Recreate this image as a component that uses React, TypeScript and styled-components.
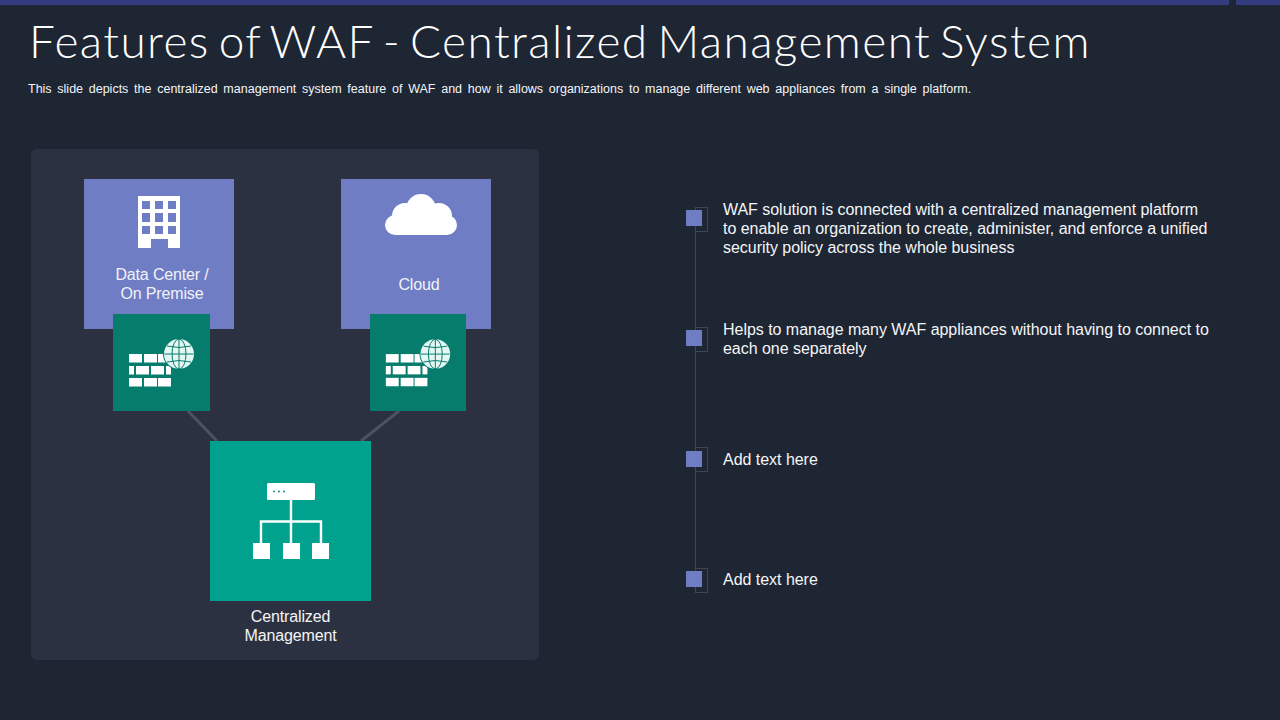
import React from "react";
import styled, { createGlobalStyle } from "styled-components";

const Global = createGlobalStyle`
  html, body { margin: 0; padding: 0; background: #1e2533; }
  * { box-sizing: border-box; }
`;

const Slide = styled.div`
  width: 1280px;
  height: 720px;
  overflow: hidden;
  background: #1e2533;
  color: #f4f5f7;
  font-family: "Liberation Sans", Arial, sans-serif;
`;

const TopBar = styled.div`
  display: flex;
  gap: 7px;
  height: 5px;
`;

const TopBarPiece = styled.div<{ $width?: number }>`
  flex: ${(p) => (p.$width ? `0 0 ${p.$width}px` : "1")};
  background: #343c80;
`;

const Header = styled.header`
  height: 144px;
  padding: 11px 0 0 28px;
`;

const Title = styled.h1`
  margin: 0 0 0 1px;
  font-family: "Lato", sans-serif;
  font-weight: 300;
  font-size: 46px;
  line-height: 50px;
  letter-spacing: 1.4px;
  word-spacing: -5px;
  white-space: nowrap;
  color: #ffffff;
`;

const Subtitle = styled.p`
  margin: 15px 0 0;
  font-size: 12.5px;
  line-height: 16px;
  word-spacing: 2.25px;
  white-space: nowrap;
`;

const Main = styled.main`
  display: flex;
  padding-left: 31px;
`;

const Panel = styled.section`
  position: relative;
  flex: 0 0 508px;
  height: 511px;
  border-radius: 6px;
  background: #2b3140;
`;

const Connectors = styled.svg`
  position: absolute;
  inset: 0;
`;

const Tile = styled.div<{ $x: number; $y: number; $w: number; $h: number; $bg: string }>`
  position: absolute;
  left: ${(p) => p.$x}px;
  top: ${(p) => p.$y}px;
  width: ${(p) => p.$w}px;
  height: ${(p) => p.$h}px;
  background: ${(p) => p.$bg};
  display: flex;
`;

const SourceTile = styled(Tile)<{ $pad: number }>`
  flex-direction: column;
  align-items: center;
  padding-top: ${(p) => p.$pad}px;
`;

const CenterTile = styled(Tile)`
  align-items: center;
  justify-content: center;
`;

const TileIcon = styled.svg<{ $shift?: number }>`
  display: block;
  flex: none;
  margin-left: ${(p) => p.$shift ?? 0}px;
`;

const TileLabel = styled.div<{ $gap: number }>`
  margin: ${(p) => p.$gap}px 0 0 6px;
  font-size: 16px;
  line-height: 19px;
  letter-spacing: -0.15px;
  text-align: center;
  color: #f1f2f8;
`;

const CanvasLabel = styled.div`
  position: absolute;
  left: 179px;
  top: 458px;
  width: 161px;
  font-size: 16px;
  line-height: 19px;
  letter-spacing: -0.15px;
  text-align: center;
`;

const PointList = styled.ul`
  position: relative;
  list-style: none;
  flex: 0 0 524px;
  align-self: flex-start;
  margin: 58px 0 0 147px;
  padding: 0;

  &::before {
    content: "";
    position: absolute;
    left: 9px;
    top: 0;
    bottom: 0;
    width: 1px;
    background: #3f4658;
  }
`;

const Point = styled.li<{ $height: number }>`
  display: flex;
  height: ${(p) => p.$height}px;
`;

const Marker = styled.div`
  position: relative;
  flex: 0 0 19px;
  height: 24px;

  &::after {
    content: "";
    position: absolute;
    left: 9px;
    top: 0;
    width: 11px;
    height: 23px;
    border: 1px solid #3f4658;
  }
`;

const MarkerSquare = styled.span<{ $top: number }>`
  position: absolute;
  z-index: 1;
  left: 0;
  top: ${(p) => p.$top}px;
  width: 16px;
  height: 16px;
  background: #6f7dc5;
`;

const PointText = styled.div<{ $top: number }>`
  width: 487px;
  margin: ${(p) => p.$top}px 0 0 18px;
  font-size: 16px;
  line-height: 19px;
  letter-spacing: -0.03px;
`;

const Line = styled.span`
  display: block;
  white-space: nowrap;
`;

const Building = () => (
  <TileIcon width="42" height="52" viewBox="0 0 42 52">
    <path
      fill="#fff"
      fillRule="evenodd"
      d="M0 0H42V52H30V43H13V52H0ZM4 5V13H12V5ZM17 5V13H25V5ZM30 5V13H38V5ZM4 17V26H12V17ZM17 17V26H25V17ZM30 17V26H38V17ZM4 30V38H12V30ZM17 30V38H25V30ZM30 30V38H38V30Z"
    />
  </TileIcon>
);

const Cloud = () => (
  <TileIcon $shift={10} width="72" height="41" viewBox="0 0 72 41">
    <g fill="#fff">
      <circle cx="10" cy="31" r="10" />
      <circle cx="62" cy="31" r="10" />
      <circle cx="20" cy="22" r="13" />
      <circle cx="36" cy="15" r="15" />
      <circle cx="54" cy="22" r="13" />
      <rect x="10" y="21" width="52" height="20" />
    </g>
  </TileIcon>
);

const Firewall = () => (
  <svg width="97" height="97" viewBox="0 0 97 97" style={{ display: "block" }}>
    <g fill="#fff">
      <rect x="16" y="40" width="13" height="8.5" />
      <rect x="31" y="40" width="13" height="8.5" />
      <rect x="45" y="40" width="13" height="8.5" />
      <rect x="16" y="52" width="5" height="8.5" />
      <rect x="23" y="52" width="13" height="8.5" />
      <rect x="38" y="52" width="13" height="8.5" />
      <rect x="53" y="52" width="5" height="8.5" />
      <rect x="16" y="64" width="13" height="8.5" />
      <rect x="31" y="64" width="13" height="8.5" />
      <rect x="45" y="64" width="13" height="8.5" />
    </g>
    <circle cx="66" cy="40" r="16" fill="#067c6d" />
    <circle cx="66" cy="40" r="15" fill="#e4f7f3" />
    <g fill="none" stroke="#067c6d" strokeWidth="1">
      <ellipse cx="66" cy="40" rx="7" ry="15" />
      <path d="M66 25V55M51.5 40H80.5M54 32Q66 35 78 32M54 48Q66 45 78 48" />
    </g>
  </svg>
);

const Network = () => (
  <svg width="76" height="76" viewBox="0 0 76 76" style={{ display: "block" }}>
    <rect x="14" y="0" width="48" height="17" rx="1.5" fill="#fff" />
    <g fill="#1d8a7c">
      <circle cx="21" cy="8.5" r="1" />
      <circle cx="26" cy="8.5" r="1" />
      <circle cx="31" cy="8.5" r="1" />
    </g>
    <path d="M38 17V60M8 60V38.5H68V60" fill="none" stroke="#fff" strokeWidth="2.4" />
    <g fill="#fff">
      <rect x="0" y="60" width="17" height="16" />
      <rect x="30" y="60" width="17" height="16" />
      <rect x="59" y="60" width="17" height="16" />
    </g>
  </svg>
);

export default function App() {
  return (
    <Slide>
      <Global />
      <TopBar>
        <TopBarPiece />
        <TopBarPiece $width={44} />
      </TopBar>
      <Header>
        <Title>Features of WAF - Centralized Management System</Title>
        <Subtitle>
          This slide depicts the centralized management system feature of WAF and how it allows organizations to manage different web appliances from a single platform.
        </Subtitle>
      </Header>
      <Main>
        <Panel>
          <Connectors width="508" height="511" viewBox="0 0 508 511">
            <path d="M157 262L186 292M368 262L330 292" stroke="#4b5262" strokeWidth="3" fill="none" />
          </Connectors>
          <SourceTile $x={53} $y={30} $w={150} $h={150} $bg="#6f7dc5" $pad={17}>
            <Building />
            <TileLabel $gap={17}>
              Data Center /<br />
              On Premise
            </TileLabel>
          </SourceTile>
          <SourceTile $x={310} $y={30} $w={150} $h={150} $bg="#6f7dc5" $pad={15}>
            <Cloud />
            <TileLabel $gap={40}>Cloud</TileLabel>
          </SourceTile>
          <Tile $x={82} $y={165} $w={97} $h={97} $bg="#067c6d">
            <Firewall />
          </Tile>
          <Tile $x={339} $y={165} $w={96} $h={97} $bg="#067c6d">
            <Firewall />
          </Tile>
          <CenterTile $x={179} $y={292} $w={161} $h={160} $bg="#00a28e">
            <Network />
          </CenterTile>
          <CanvasLabel>
            Centralized
            <br />
            Management
          </CanvasLabel>
        </Panel>
        <PointList>
          <Point $height={120}>
            <Marker>
              <MarkerSquare $top={3} />
            </Marker>
            <PointText $top={-7}>
              <Line>WAF solution is connected with a centralized management platform</Line>
              <Line>to enable an organization to create, administer, and enforce a unified</Line>
              <Line>security policy across the whole business</Line>
            </PointText>
          </Point>
          <Point $height={120}>
            <Marker>
              <MarkerSquare $top={3} />
            </Marker>
            <PointText $top={-7}>
              <Line>Helps to manage many WAF appliances without having to connect to</Line>
              <Line>each one separately</Line>
            </PointText>
          </Point>
          <Point $height={121}>
            <Marker>
              <MarkerSquare $top={4} />
            </Marker>
            <PointText $top={3}>
              <Line>Add text here</Line>
            </PointText>
          </Point>
          <Point $height={24}>
            <Marker>
              <MarkerSquare $top={3} />
            </Marker>
            <PointText $top={2}>
              <Line>Add text here</Line>
            </PointText>
          </Point>
        </PointList>
      </Main>
    </Slide>
  );
}
